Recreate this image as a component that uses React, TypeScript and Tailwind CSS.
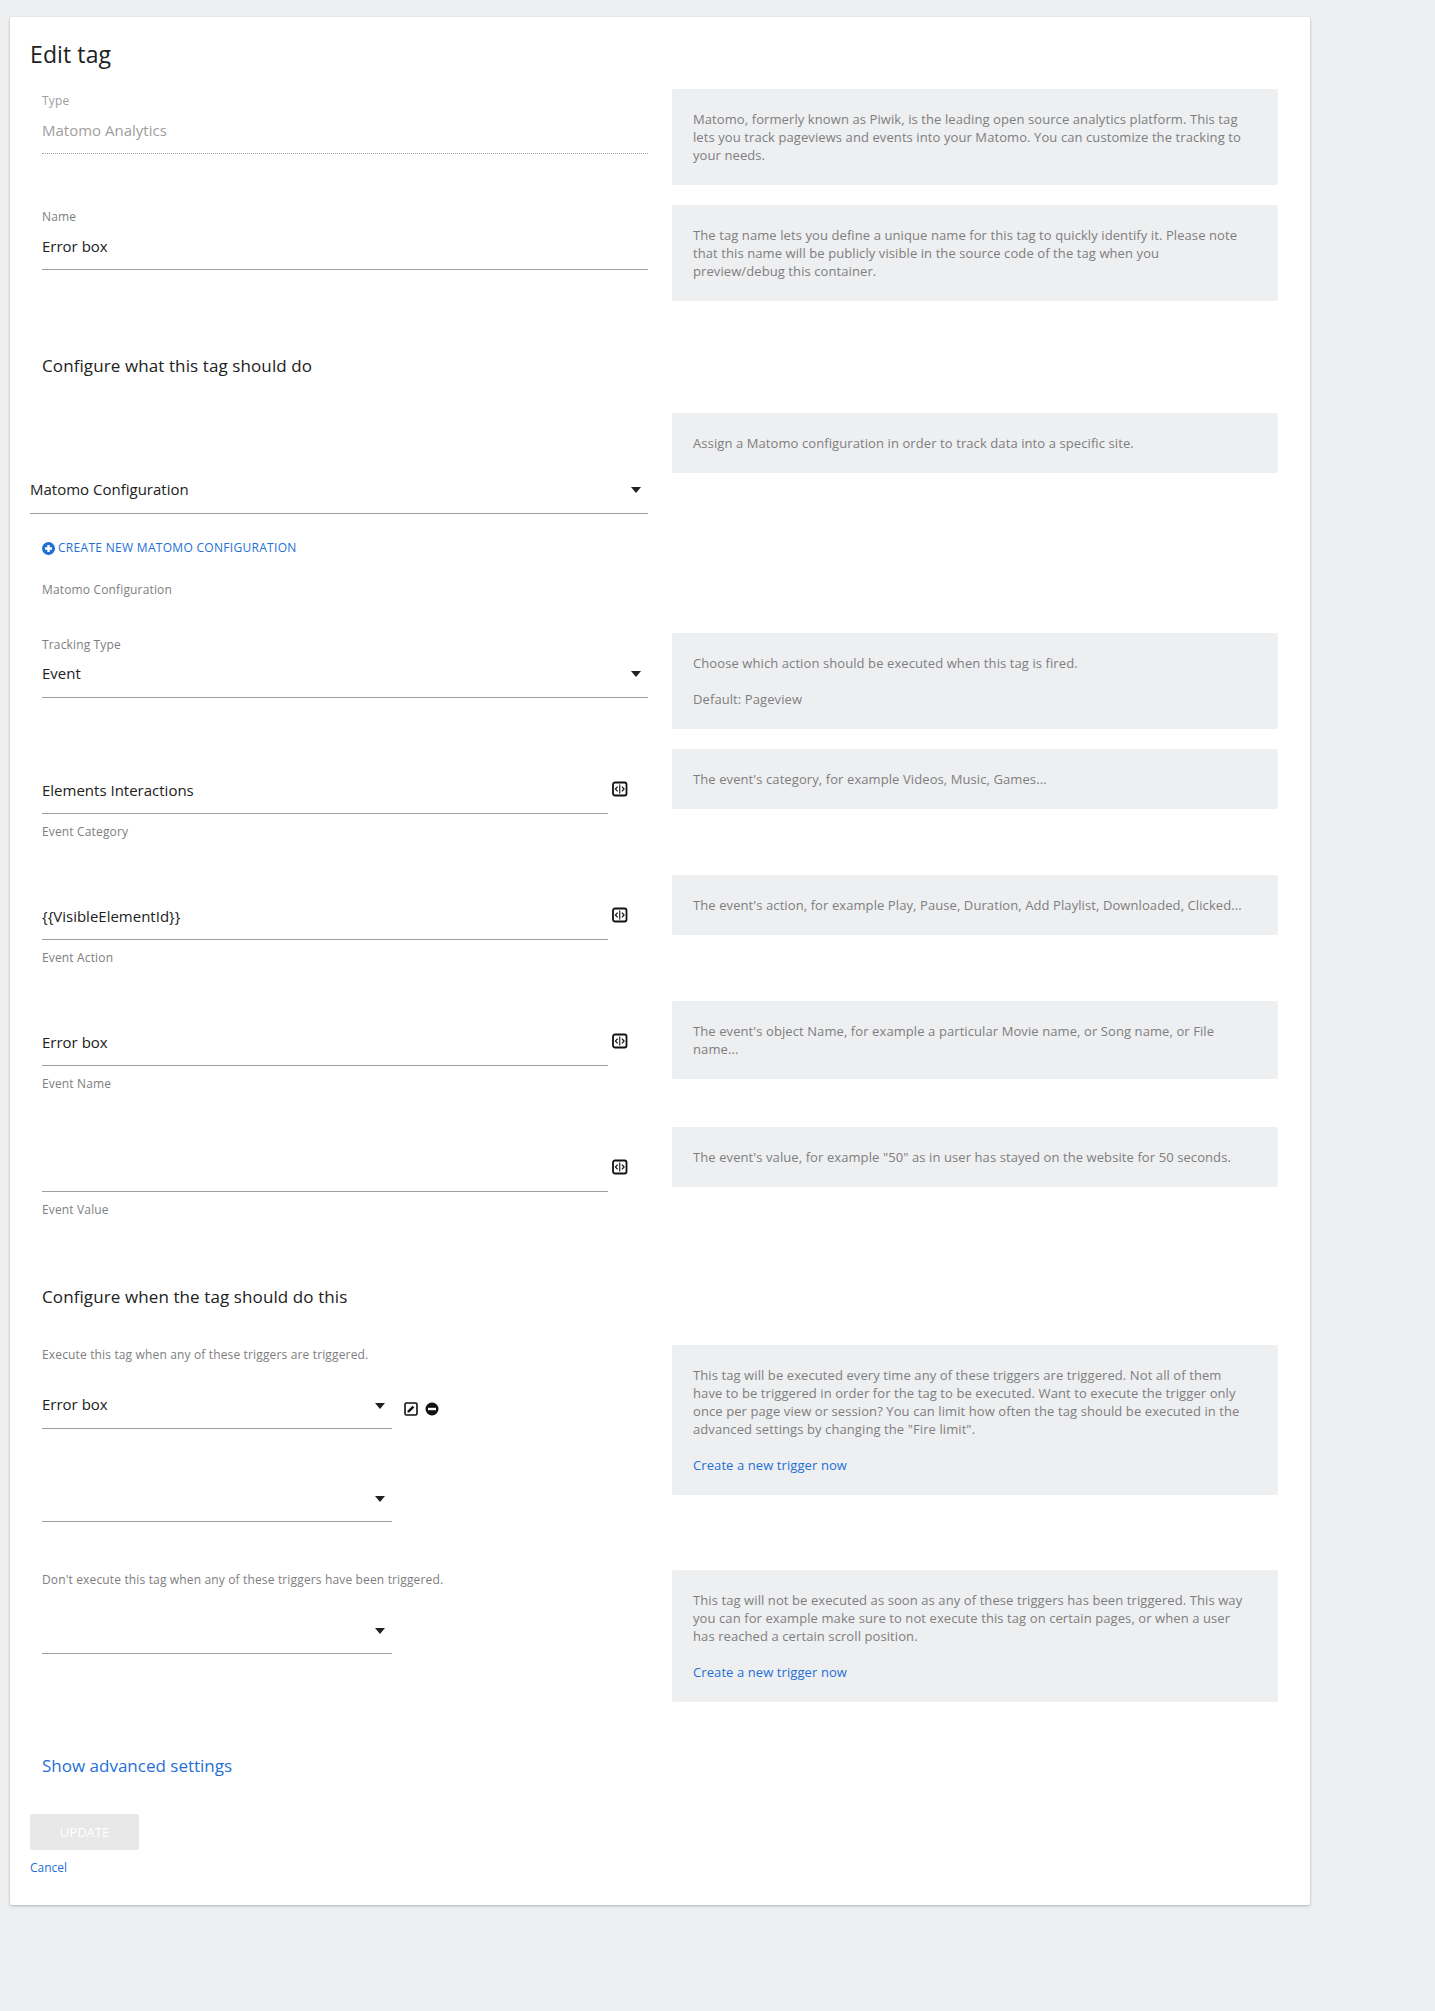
import React from 'react';

const lineColor = 'border-[#9e9e9e]';
const labelText = 'h-4 text-xs leading-4 tracking-[0.15px]';

const CodeIcon = () => (
  <svg width="16" height="16" viewBox="0 0 16 16" className="shrink-0 text-[#111]" fill="none" stroke="currentColor">
    <rect x="1" y="1.5" width="13.5" height="13" rx="2" strokeWidth="1.8" />
    <path d="M5.6 5.6 3.4 8l2.2 2.4M9.9 5.6 12.1 8l-2.2 2.4" strokeWidth="1.2" />
    <path d="M7.75 3.6v8.8" strokeWidth="1.1" />
  </svg>
);

const Caret = () => (
  <svg width="10" height="6" viewBox="0 0 10 6" className="shrink-0 text-[#212121]" fill="currentColor">
    <path d="M0 0h10L5 6z" />
  </svg>
);

const EditIcon = () => (
  <svg width="14" height="14" viewBox="0 0 14 14" fill="none" className="shrink-0 text-[#111]">
    <rect x="1" y="1" width="12" height="12" rx="1.5" stroke="currentColor" strokeWidth="1.6" />
    <path d="M3.5 10.5V8.8L8.6 3.8l1.7 1.7-5.1 5z" fill="currentColor" />
  </svg>
);

const MinusIcon = () => (
  <svg width="14" height="14" viewBox="0 0 14 14" className="shrink-0 text-[#111]">
    <circle cx="7" cy="7" r="6.5" fill="currentColor" />
    <rect x="3" y="5.8" width="8" height="2.4" fill="#fff" />
  </svg>
);

const PlusIcon = () => (
  <svg width="13" height="13" viewBox="0 0 13 13" className="shrink-0 text-[#1f6fd6]">
    <circle cx="6.5" cy="6.5" r="6.5" fill="currentColor" />
    <path d="M5.3 3h2.4v2.3H10v2.4H7.7V10H5.3V7.7H3V5.3h2.3z" fill="#fff" />
  </svg>
);

const InfoBox = ({ children, height }: { children: React.ReactNode; height: string }) => (
  <div className={`w-[606px] shrink-0 rounded-[2px] bg-[#eeeff1] pl-[21px] pr-[26px] pt-[21px] text-[13px] leading-[18px] tracking-[0.09px] text-[#7e7e7e] ${height}`}>
    {children}
  </div>
);

const TextField = ({ label, value, disabled }: { label: string; value: string; disabled?: boolean }) => (
  <div className="pl-3 pt-1">
    <div className={`${labelText} ${disabled ? 'text-[#9e9e9e]' : 'text-[#7e7e7e]'}`}>{label}</div>
    <div className={`h-[45px] border-b pt-[11px] text-[15px] leading-5 ${lineColor} ${disabled ? 'border-dotted text-[#9e9e9e]' : 'text-[#212121]'}`}>
      {value}
    </div>
  </div>
);

const VariableField = ({ label, value, info, infoHeight }: { label: string; value: string; info: string; infoHeight: string }) => (
  <div className="flex h-[126px] gap-6">
    <div className="w-[618px] pl-3">
      <div className="flex">
        <div className={`h-[65px] w-[566px] border-b pt-[31px] text-[15px] leading-5 text-[#212121] ${lineColor}`}>{value}</div>
        <div className="ml-1 pt-8"><CodeIcon /></div>
      </div>
      <div className={`mt-[10px] text-[#7e7e7e] ${labelText}`}>{label}</div>
    </div>
    <InfoBox height={infoHeight}>{info}</InfoBox>
  </div>
);

const TriggerSelect = ({ value }: { value?: string }) => (
  <div className={`flex h-[48px] w-[350px] items-start justify-between border-b pr-[7px] pt-[13px] text-[15px] leading-5 text-[#212121] ${lineColor}`}>
    <span>{value}</span>
    <span className="pt-[9px]"><Caret /></span>
  </div>
);

const App = () => (
  <div className="min-h-[2011px] bg-[#eeeff1] pl-[10px] pt-[17px] font-['Open_Sans','Liberation_Sans',sans-serif]">
    <div className="h-[1888px] w-[1300px] rounded-[2px] bg-white pl-5 pt-[21px] shadow-[0_1px_3px_rgba(0,0,0,0.25)]">
      <h1 className="mb-[19px] h-8 text-[23px] leading-8 tracking-[0.1px] text-[#212121]">Edit tag</h1>

      <div className="flex h-[116px] gap-6">
        <div className="w-[618px]"><TextField label="Type" value="Matomo Analytics" disabled /></div>
        <InfoBox height="h-[96px]">
          Matomo, formerly known as Piwik, is the leading open source analytics platform. This tag lets you track pageviews and events into your Matomo. You can customize the tracking to your needs.
        </InfoBox>
      </div>

      <div className="flex h-[96px] gap-6">
        <div className="w-[618px]"><TextField label="Name" value="Error box" /></div>
        <InfoBox height="h-[96px]">
          The tag name lets you define a unique name for this tag to quickly identify it. Please note that this name will be publicly visible in the source code of the tag when you preview/debug this container.
        </InfoBox>
      </div>

      <h2 className="mb-[35px] ml-3 mt-[53px] h-6 text-[17px] leading-6 tracking-[0.1px] text-[#212121]">Configure what this tag should do</h2>

      <div className="flex h-[220px] gap-6">
        <div className="w-[618px]">
          <div className={`flex h-[101px] items-start justify-between border-b pr-[7px] pt-[66px] text-[15px] leading-5 text-[#212121] ${lineColor}`}>
            <span>Matomo Configuration</span>
            <span className="pt-2"><Caret /></span>
          </div>
          <a className="ml-3 mt-[26px] flex h-4 items-center gap-[3px] text-xs uppercase leading-4 tracking-[0.3px] text-[#1f6fd6]" href="#">
            <PlusIcon />
            Create new Matomo configuration
          </a>
          <div className={`ml-3 mt-[26px] text-[#7e7e7e] ${labelText}`}>Matomo Configuration</div>
        </div>
        <InfoBox height="h-[60px]">Assign a Matomo configuration in order to track data into a specific site.</InfoBox>
      </div>

      <div className="flex h-[116px] gap-6">
        <div className="w-[618px] pl-3 pt-1">
          <div className={`text-[#7e7e7e] ${labelText}`}>Tracking Type</div>
          <div className={`flex h-[45px] items-start justify-between border-b pr-[7px] pt-[10px] text-[15px] leading-5 text-[#212121] ${lineColor}`}>
            <span>Event</span>
            <span className="pt-2"><Caret /></span>
          </div>
        </div>
        <InfoBox height="h-[96px]">
          Choose which action should be executed when this tag is fired.
          <br />
          <br />
          Default: Pageview
        </InfoBox>
      </div>

      <VariableField
        label="Event Category"
        value="Elements Interactions"
        info="The event's category, for example Videos, Music, Games..."
        infoHeight="h-[60px]"
      />
      <VariableField
        label="Event Action"
        value="{{VisibleElementId}}"
        info="The event's action, for example Play, Pause, Duration, Add Playlist, Downloaded, Clicked..."
        infoHeight="h-[60px]"
      />
      <VariableField
        label="Event Name"
        value="Error box"
        info="The event's object Name, for example a particular Movie name, or Song name, or File name..."
        infoHeight="h-[78px]"
      />
      <VariableField
        label="Event Value"
        value=""
        info={'The event\'s value, for example "50" as in user has stayed on the website for 50 seconds.'}
        infoHeight="h-[60px]"
      />

      <h2 className="mb-9 ml-3 mt-8 h-6 text-[17px] leading-6 tracking-[0.1px] text-[#212121]">Configure when the tag should do this</h2>

      <div className="flex h-[225px] gap-6">
        <div className="w-[618px] pl-3 pt-[2px]">
          <div className={`text-[#7e7e7e] ${labelText}`}>Execute this tag when any of these triggers are triggered.</div>
          <div className="mt-[18px] flex items-start">
            <TriggerSelect value="Error box" />
            <div className="ml-3 flex gap-[7px] pt-[21px]">
              <EditIcon />
              <MinusIcon />
            </div>
          </div>
          <div className="mt-[45px]"><TriggerSelect /></div>
        </div>
        <InfoBox height="h-[150px]">
          This tag will be executed every time any of these triggers are triggered. Not all of them have to be triggered in order for the tag to be executed. Want to execute the trigger only
          <br />
          once per page view or session? You can limit how often the tag should be executed in the
          <br />
          advanced settings by changing the "Fire limit".
          <br />
          <br />
          <a href="#" className="text-[#1f6fd6]">Create a new trigger now</a>
        </InfoBox>
      </div>

      <div className="flex h-[132px] gap-6">
        <div className="w-[618px] pl-3 pt-[2px]">
          <div className={`text-[#7e7e7e] ${labelText}`}>Don't execute this tag when any of these triggers have been triggered.</div>
          <div className="mt-[18px]"><TriggerSelect /></div>
        </div>
        <InfoBox height="h-[132px]">
          This tag will not be executed as soon as any of these triggers has been triggered. This way you can for example make sure to not execute this tag on certain pages, or when a user has reached a certain scroll position.
          <br />
          <br />
          <a href="#" className="text-[#1f6fd6]">Create a new trigger now</a>
        </InfoBox>
      </div>

      <a href="#" className="ml-3 mt-[52px] block h-6 text-[17px] leading-6 text-[#1f6fd6]">Show advanced settings</a>

      <button disabled className="mt-9 block h-9 w-[109px] rounded-[2px] bg-[#e8e8e8] pt-[2px] text-[13px] font-medium uppercase text-white">Update</button>
      <a href="#" className="mt-[10px] block h-4 text-xs leading-4 text-[#1f6fd6]">Cancel</a>
    </div>
  </div>
);

export default App;
